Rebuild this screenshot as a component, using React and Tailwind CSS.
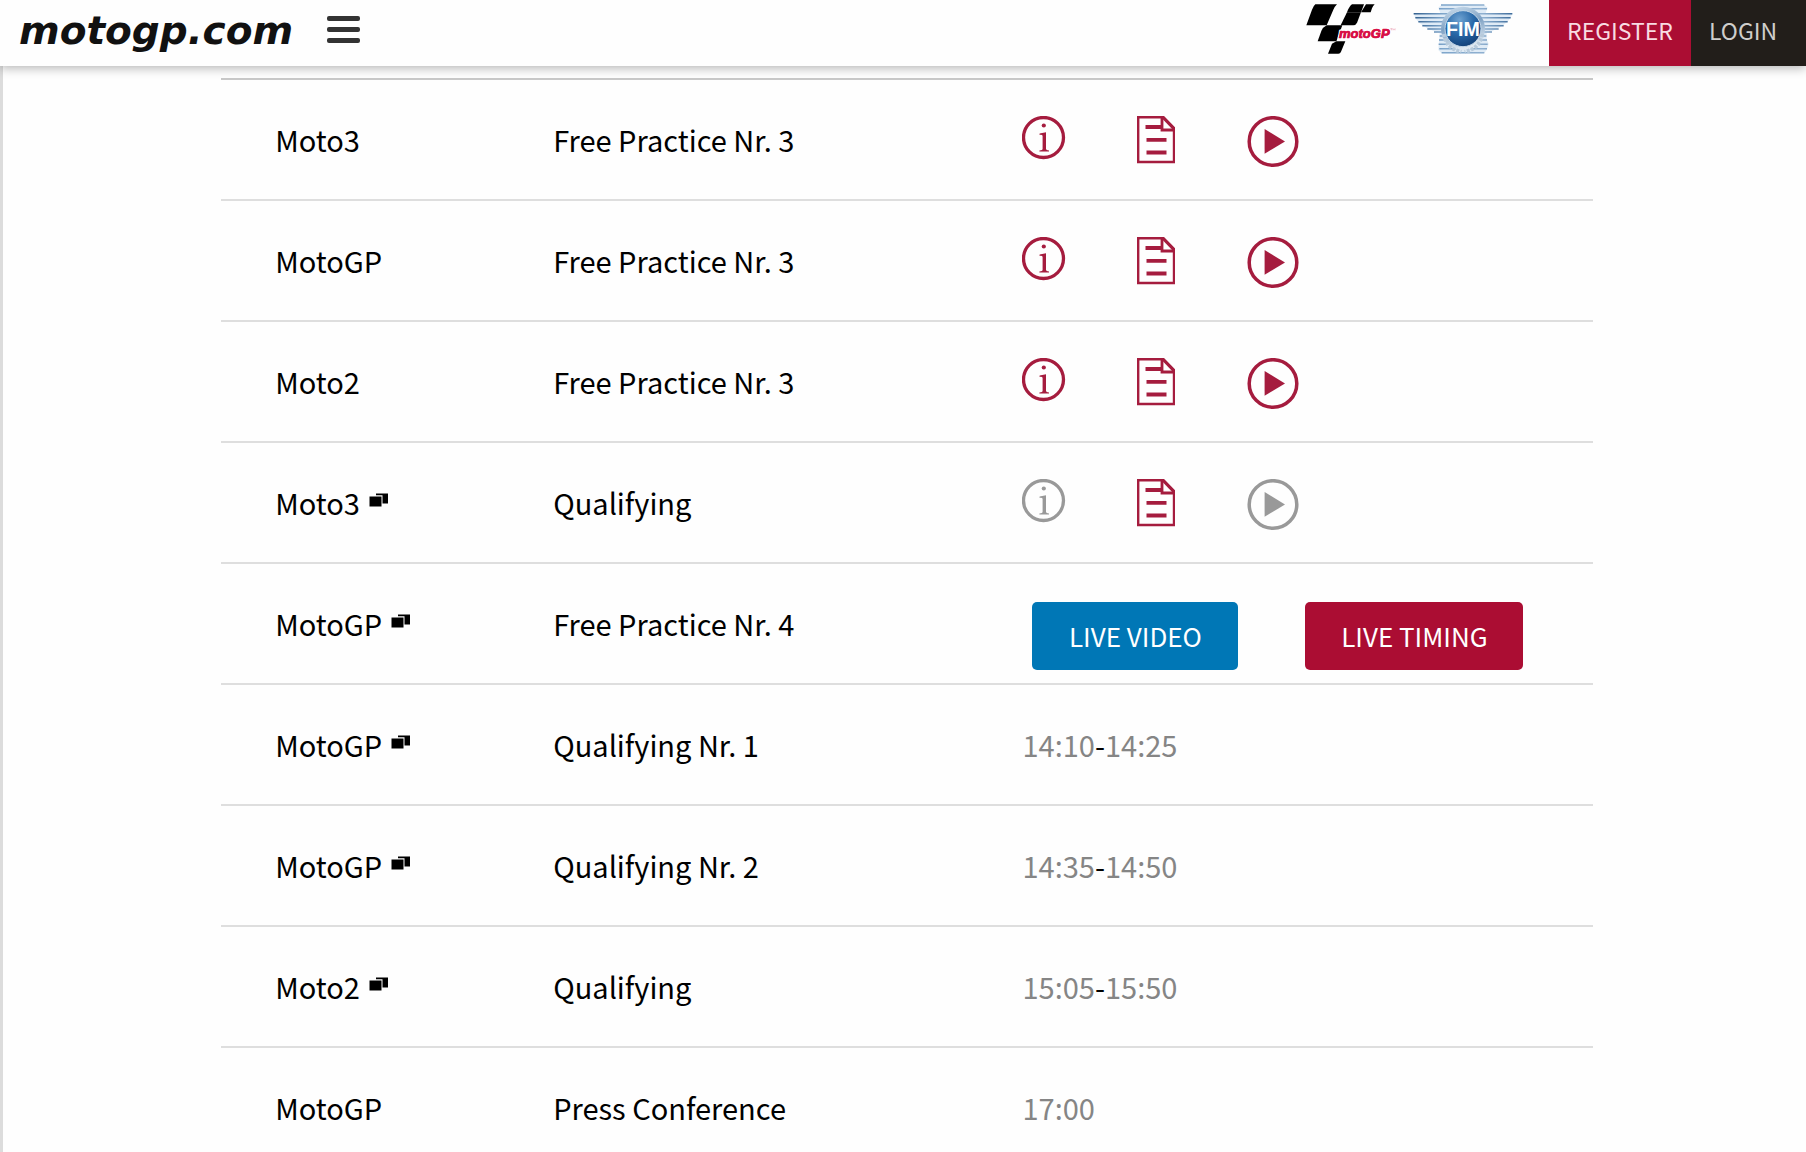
const BRAND = 'text-[#a51c3e]';
const MUTED = 'text-[#999999]';

function InfoIcon() {
  return (
    <svg viewBox="0 0 44 44" className="size-11" fill="none" aria-hidden="true">
      <circle cx="21.5" cy="21.5" r="20" stroke="currentColor" strokeWidth="3.3" />
      <circle cx="21.800" cy="9.5" r="2.1" fill="currentColor" />
      <path d="M17.6 17.6 L24 16.2 V33 Q24 34.4 27 34.4 V35.6 H17.4 V34.4 Q20.6 34.4 20.6 33 V20 Q20.6 18.6 17.6 18.9 Z" fill="currentColor" />
    </svg>
  );
}

function DocIcon() {
  return (
    <svg viewBox="0 0 38 48" className="h-12 w-[38px]" fill="none" stroke="currentColor" aria-hidden="true">
      <path d="M1.2 1.2 H26.5 L37 12 V46 H1.200 Z" strokeWidth="2.4" />
      <path d="M25 1 V14 H37.5" strokeWidth="2.8" />
      <path d="M25.5 1 L37 13" strokeWidth="2.6" />
      <path d="M8.5 11 H25 M9.5 23.800 H29.5 M9.5 36.5 H29.5" strokeWidth="3.8" />
    </svg>
  );
}

function PlayIcon() {
  return (
    <svg viewBox="0 0 52 52" className="size-[52px]" fill="none" aria-hidden="true">
      <circle cx="26" cy="25.500" r="23.800" stroke="currentColor" strokeWidth="3.5" />
      <path d="M17.6 13 L38 25.500 L17.6 37.8 Z" fill="currentColor" />
    </svg>
  );
}

function LiveIcon() {
  return (
    <svg viewBox="0 0 20 14" className="mb-1 h-[14px] w-5" aria-hidden="true">
      <path d="M7 0.5 H19 V10.5 H13.5 V2.3 H7 Z" />
      <rect x="0.5" y="3.5" width="12" height="10" />
    </svg>
  );
}

function MotoGPLogo() {
  return (
    <svg viewBox="45 0 279 168" className="h-14 w-[93px]" aria-label="MotoGP" role="img">
      <path d="M76 13 H141 Q134 20 130 29 L110 76 H49 L66 29 Q70 18 76 13 Z" />
      <path d="M186 13 H222 L213 37 H171 Q177 20 186 13 Z" />
      <path d="M228 13 H254 Q249 17 246 25 L242 37 H213 Z" />
      <path d="M171 37 H213 L201 68 Q197 76 190 76 H152 Z" />
      <path d="M110 76 H157 L139 124 H83 L94 93 Q98 82 110 76 Z" />
      <path d="M139 124 H166 L153 155 Q151 161 145 161 H114 L126 131 Z" />
      <g fontFamily="'Liberation Sans'" fontSize="39" fontWeight="700" fontStyle="italic" strokeLinejoin="round">
        <text x="147" y="115" fill="#d80f45" stroke="#fff" strokeWidth="9" paintOrder="stroke" aria-hidden="true">motoGP</text>
        <text x="147" y="115" fill="#d80f45" stroke="#d80f45" strokeWidth="2">motoGP</text>
      </g>
      <path d="M301 86 H307 M304 86 V91 M309 91 V86 L312 89 L315 86 V91" fill="none" stroke="#e58aa2" strokeWidth="1.5" />
    </svg>
  );
}

function FimLogo() {
  return (
    <svg viewBox="369 0 300 168" className="h-14 w-[100px]" aria-label="FIM" role="img">
      <defs>
        <linearGradient id="wing" gradientUnits="userSpaceOnUse" x1="371" x2="667" y1="0" y2="0">
          <stop offset="0" stopColor="#33608f" />
          <stop offset="0.3" stopColor="#7fa6cb" />
          <stop offset="0.7" stopColor="#8fb0d0" />
          <stop offset="1" stopColor="#3e6c9b" />
        </linearGradient>
        <linearGradient id="ring" x1="0" x2="0.3" y1="0" y2="1">
          <stop offset="0" stopColor="#d3e3f1" />
          <stop offset="0.5" stopColor="#7fa2c4" />
          <stop offset="1" stopColor="#dfe9f2" />
        </linearGradient>
        <radialGradient id="disc" cx="0.4" cy="0.25" r="0.8">
          <stop offset="0" stopColor="#6fa3d2" />
          <stop offset="0.5" stopColor="#2868a8" />
          <stop offset="1" stopColor="#123e75" />
        </radialGradient>
      </defs>
      <path d="M371 39 H451 L445 23 L455 14 H582 L593 23 L587 39 H667 Q663 60 641 74 Q620 90 590 98 V118 L596 132 L590 150 L582 160 H455 L445 150 L449 98 Q420 92 398 76 Q376 62 371 39 Z" fill="#dfebf6" />
      <path d="M453 15 H583 M447 26 H591 M371 41 H667 M376 53 H662 M385 65 H653 M397 77 H641 M412 87 H626 M432 96 H606 M449 108 H589 M447 120 H591 M446 133 H593 M448 146 H591 M455 158 H583" fill="none" stroke="url(#wing)" strokeWidth="4.5" />
      <circle cx="519" cy="86" r="66" fill="url(#ring)" />
      <path d="M461 102 Q468 145 514 156 M577 102 Q570 145 524 156" fill="none" stroke="#b7cadb" strokeWidth="12" strokeDasharray="9 4" />
      <circle cx="519" cy="86" r="54" fill="url(#disc)" stroke="#c3d7e8" strokeWidth="3" />
      <text x="519" y="107" textAnchor="middle" fontFamily="'Liberation Sans'" fontSize="59" fontWeight="700" fill="#fff">
        FIM
      </text>
    </svg>
  );
}

const sessions = [
  { category: 'Moto3', name: 'Free Practice Nr. 3', media: 'all' },
  { category: 'MotoGP', name: 'Free Practice Nr. 3', media: 'all' },
  { category: 'Moto2', name: 'Free Practice Nr. 3', media: 'all' },
  { category: 'Moto3', live: true, name: 'Qualifying', media: 'results' },
  { category: 'MotoGP', live: true, name: 'Free Practice Nr. 4', onAir: true },
  { category: 'MotoGP', live: true, name: 'Qualifying Nr. 1', time: ['14:10', '14:25'] },
  { category: 'MotoGP', live: true, name: 'Qualifying Nr. 2', time: ['14:35', '14:50'] },
  { category: 'Moto2', live: true, name: 'Qualifying', time: ['15:05', '15:50'] },
  { category: 'MotoGP', name: 'Press Conference', time: ['17:00'] },
];

function MediaLinks({ media }) {
  const tone = media === 'all' ? BRAND : MUTED;
  return (
    <div className="flex items-start pt-1">
      <a href="#info" aria-label="Information" className={tone}><InfoIcon /></a>
      <a href="#results" aria-label="Results" className={`ml-[71px] ${BRAND}`}><DocIcon /></a>
      <a href="#video" aria-label="Video" className={`ml-[72px] ${tone}`}><PlayIcon /></a>
    </div>
  );
}

function SessionAction({ session }) {
  if (session.media) return <MediaLinks media={session.media} />;
  if (session.onAir) {
    return (
      <div className="flex gap-[67px] pt-6 pl-[10px] text-[26px] leading-none text-white">
        <button type="button" className="h-[68px] w-[206px] rounded-[5px] bg-[#0077b6]">LIVE VIDEO</button>
        <button type="button" className="h-[68px] w-[218px] rounded-[5px] bg-[#ab0d33]">LIVE TIMING</button>
      </div>
    );
  }
  const [start, end] = session.time;
  return (
    <div className="pb-[2px] text-[#858585]">
      {start}
      {end && <><span className="text-black">-</span>{end}</>}
    </div>
  );
}

export default function App() {
  return (
    <div className="min-h-screen border-l-[3px] border-[#dcdcdc] bg-[#fefefe] font-['Noto_Sans_CJK_SC','Noto_Sans',sans-serif] text-black">
      <header className="sticky top-0 z-10 -ml-[3px] flex h-[66px] items-stretch bg-[#fefefe] shadow-[0_2px_10px_rgba(0,0,0,0.3)]">
        <a href="#home" className="ml-[19px] flex h-[60px] items-center font-['DejaVu_Sans',sans-serif] text-[39px] leading-none font-bold text-[#111] italic">motogp.com</a>
        <button type="button" aria-label="Menu" className="ml-[34px] flex h-[59px] w-[33px] flex-col justify-center gap-[6px]">
          <span className="h-[5px] w-full rounded-[2px] bg-[#333]" />
          <span className="h-[5px] w-full rounded-[2px] bg-[#333]" />
          <span className="h-[5px] w-full rounded-[2px] bg-[#333]" />
        </button>
        <div className="mr-9 ml-auto flex gap-[15px]">
          <MotoGPLogo />
          <FimLogo />
        </div>
        <a href="#register" className="flex w-[142px] items-center justify-center bg-[#ab0d33] pb-[6px] text-[23px] text-[#f8dbe2]">REGISTER</a>
        <a href="#login" className="flex w-[115px] items-center bg-[#221e1a] pb-[6px] pl-[18px] text-[23px] text-[#d0cecb]">LOGIN</a>
      </header>
      <main className="mr-[11.8%] ml-[12.1%] pt-3">
        <table className="w-full table-fixed border-collapse border-t-2 border-[#c8c8c8] text-[29px] leading-10">
          <colgroup>
            <col className="w-[24.2%]" />
            <col className="w-[34.2%]" />
            <col />
          </colgroup>
          <tbody>
            {sessions.map((session, index) => (
              <tr key={index} className="h-[121px] border-b-2 border-[#dedede]">
                <td className="pb-[2px] pl-[54px]">
                  <span className="flex items-center gap-[9px]">
                    {session.category}
                    {session.live && <LiveIcon />}
                  </span>
                </td>
                <td className="pb-[2px]">{session.name}</td>
                <td>
                  <SessionAction session={session} />
                </td>
              </tr>
            ))}
          </tbody>
        </table>
      </main>
    </div>
  );
}
